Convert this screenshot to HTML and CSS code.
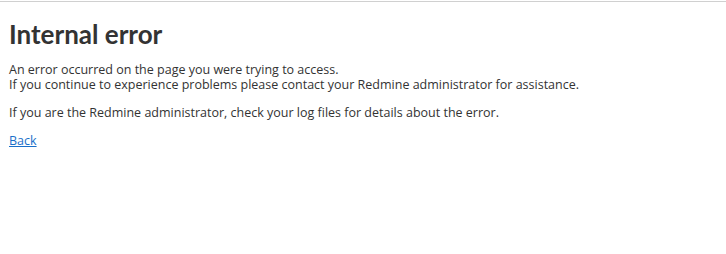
FILE: index.html
```html
<!DOCTYPE html>
<html lang="en">
<head>
    <meta charset="UTF-8">
    <title>Internal error</title>
    <link rel="stylesheet" href="styles.css">
</head>
<body>
    <div class="content">
        <h2>Internal error</h2>
        <p>An error occurred on the page you were trying to access.<br>
        If you continue to experience problems please contact your Redmine administrator for assistance.</p>
        <p>If you are the Redmine administrator, check your log files for details about the error.</p>
        <p><a href="javascript:history.back()">Back</a></p>
    </div>
</body>
</html>
```

FILE: styles.css
```css
body {
    margin: 0;
    font-family: "Open Sans", "Liberation Sans", sans-serif;
    font-size: 12.5px;
    color: #333;
    background: #fff;
}
.content {
    border-top: 1px solid #d0d0d0;
    margin-top: 1px;
    padding: 8px 9px;
}
h2 {
    font-family: Lato, "Open Sans", sans-serif;
    font-size: 26px;
    font-weight: bold;
    color: #333;
    margin: 9px 0 13px;
    line-height: 30px;
}
p {
    margin: 0 0 13px;
    line-height: 15px;
}
a {
    color: #1a6fc9;
}
```
